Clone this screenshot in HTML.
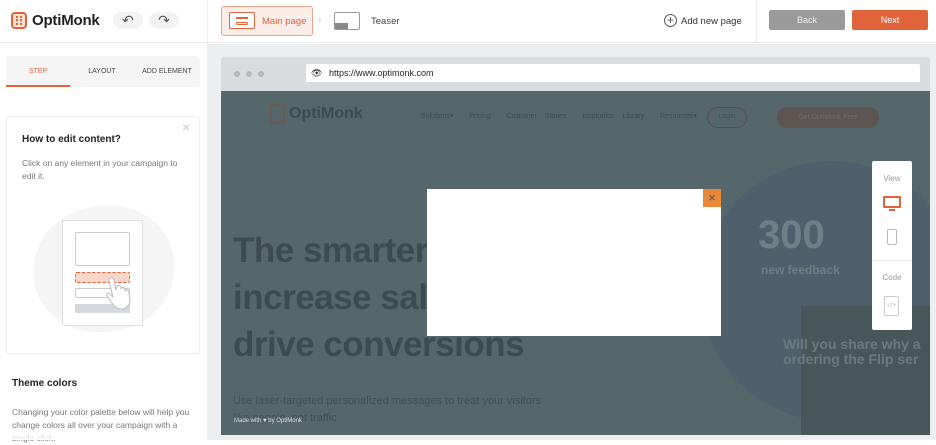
<!DOCTYPE html>
<html><head><meta charset="utf-8"><style>
*{margin:0;padding:0;box-sizing:border-box}
body{width:936px;height:440px;overflow:hidden;font-family:"Liberation Sans",sans-serif;background:#fff;position:relative}
.a{position:absolute}
</style></head><body>
<!-- header -->
<div class="a" style="left:0;top:0;width:936px;height:43px;border-bottom:1px solid #e8e8e8;background:#fff"></div>
<div class="a" style="left:207px;top:0;width:1px;height:43px;background:#ececec"></div>
<div class="a" style="left:756px;top:0;width:1px;height:43px;background:#ececec"></div>
<div class="a" style="left:11px;top:12px;width:16px;height:17px;border:2px solid #e0633a;border-radius:4px;background:#fbe0d4"></div>
<div class="a" style="left:16px;top:16px;width:6px;height:9px;border-left:2px dotted #e0633a;border-right:2px dotted #e0633a"></div>
<div class="a" style="left:32px;top:12px;font-size:15px;font-weight:bold;color:#222;letter-spacing:-0.2px">OptiMonk</div>
<div class="a" style="left:113px;top:12px;width:30px;height:17px;border-radius:9px;background:#f3f3f3;font-size:14px;color:#555;text-align:center;line-height:16px">↶</div>
<div class="a" style="left:149px;top:12px;width:30px;height:17px;border-radius:9px;background:#f3f3f3;font-size:14px;color:#555;text-align:center;line-height:16px">↷</div>
<div class="a" style="left:221px;top:6px;width:92px;height:30px;border:1px solid #e9a58c;border-radius:3px;background:#fbeee8"></div>
<div class="a" style="left:229px;top:12px;width:26px;height:17px;border:1.5px solid #e0633a;border-radius:2px;background:#fff"></div>
<div class="a" style="left:236px;top:17px;width:12px;height:1.5px;background:#e0633a"></div>
<div class="a" style="left:236px;top:22px;width:12px;height:3px;border:1.5px solid #e0633a;border-radius:2px"></div>
<div class="a" style="left:262px;top:16px;font-size:9.5px;color:#e0633a">Main page</div>
<div class="a" style="left:318px;top:14px;font-size:10px;color:#bbb">›</div>
<div class="a" style="left:334px;top:12px;width:26px;height:18px;border:1.5px solid #999;border-radius:2px"></div>
<div class="a" style="left:335px;top:23px;width:13px;height:6px;background:#888"></div>
<div class="a" style="left:371px;top:16px;font-size:9.5px;color:#444">Teaser</div>
<div class="a" style="left:664px;top:14px;width:13px;height:13px;border:1.3px solid #555;border-radius:50%;font-size:12px;line-height:10px;text-align:center;color:#555">+</div>
<div class="a" style="left:681px;top:16px;font-size:9.5px;color:#333">Add new page</div>
<div class="a" style="left:769px;top:10px;width:76px;height:20px;background:#9a9a9a;border-radius:2px;color:#eee;font-size:9px;text-align:center;line-height:20px">Back</div>
<div class="a" style="left:852px;top:10px;width:76px;height:20px;background:#e0633a;border-radius:2px;color:#fff;font-size:9px;text-align:center;line-height:20px">Next</div>
<!-- sidebar -->
<div class="a" style="left:207px;top:43px;width:1px;height:397px;background:#ececec"></div>
<div class="a" style="left:6px;top:56px;width:194px;height:31px;background:#f5f5f5;border-radius:3px"></div>
<div class="a" style="left:6px;top:85px;width:64px;height:2px;background:#e0633a"></div>
<div class="a" style="left:6px;top:68px;width:64px;text-align:center;font-size:7px;color:#e0633a">STEP</div>
<div class="a" style="left:70px;top:68px;width:64px;text-align:center;font-size:7px;color:#444">LAYOUT</div>
<div class="a" style="left:134px;top:68px;width:66px;text-align:center;font-size:7px;color:#444">ADD ELEMENT</div>
<div class="a" style="left:6px;top:116px;width:194px;height:238px;border:1px solid #eee;border-radius:3px"></div>
<div class="a" style="left:182px;top:119px;font-size:14px;color:#ccc">×</div>
<div class="a" style="left:22px;top:134px;font-size:10px;font-weight:bold;color:#222">How to edit content?</div>
<div class="a" style="left:22px;top:157px;width:165px;font-size:8.5px;line-height:13px;color:#777">Click on any element in your campaign to edit it.</div>
<div class="a" style="left:34px;top:206px;width:140px;height:126px;border-radius:50% 45% 50% 45%;background:#f5f5f6"></div>
<div class="a" style="left:62px;top:220px;width:81px;height:106px;border:1px solid #ddd;background:#fff;border-radius:2px"></div>
<div class="a" style="left:75px;top:232px;width:55px;height:34px;border:1px solid #ccc;border-radius:2px"></div>
<div class="a" style="left:75px;top:272px;width:55px;height:11px;border:1px dashed #e0633a;background:#f8d6ca;border-radius:2px"></div>
<div class="a" style="left:75px;top:288px;width:55px;height:10px;border:1px solid #ccc;border-radius:2px"></div>
<div class="a" style="left:75px;top:304px;width:55px;height:9px;background:#d5d9de;border-radius:1px"></div>
<svg class="a" style="left:105px;top:275px" width="36" height="36" viewBox="0 0 36 36"><path d="M5 3c2-1 4 0 4 2l2 10 1-4c2-1 3 0 4 1l0 2c1-2 3-2 4 0v2c1-2 4-1 4 1l1 8c0 5-4 9-9 9-4 0-7-3-9-6l-5-7c-1-2 1-4 3-2l3 3L4 6c0-1 0-2 1-3z" fill="#fff" stroke="#bbb" stroke-width="1"/></svg>
<div class="a" style="left:12px;top:378px;font-size:10px;font-weight:bold;color:#222">Theme colors</div>
<div class="a" style="left:12px;top:406px;width:185px;font-size:8.5px;line-height:13px;color:#777">Changing your color palette below will help you change colors all over your campaign with a single click.</div>
<div class="a" style="left:0;top:430px;width:207px;height:10px;background:linear-gradient(rgba(255,255,255,0),#fff)"></div>
<!-- main -->
<div class="a" style="left:208px;top:44px;width:728px;height:396px;background:#eceef0"></div>
<div class="a" style="left:221px;top:57px;width:709px;height:34px;background:#d9dcdf;border-radius:3px 3px 0 0"></div>
<div class="a" style="left:234px;top:71px;width:6px;height:6px;border-radius:50%;background:#b5b9bd"></div>
<div class="a" style="left:246px;top:71px;width:6px;height:6px;border-radius:50%;background:#b5b9bd"></div>
<div class="a" style="left:258px;top:71px;width:6px;height:6px;border-radius:50%;background:#b5b9bd"></div>
<div class="a" style="left:306px;top:64px;width:614px;height:18px;background:#fff;border-radius:2px"></div>
<div class="a" style="left:311px;top:68px;font-size:9px;color:#222">👁</div>
<div class="a" style="left:329px;top:68px;font-size:9px;color:#222">https://www.optimonk.com</div>
<div class="a" style="left:221px;top:91px;width:709px;height:344px;background:#56676b;overflow:hidden">
 <div class="a" style="left:480px;top:70px;width:260px;height:260px;border-radius:50%;background:#505f6c"></div>
 <div class="a" style="left:580px;top:215px;width:140px;height:140px;background:#465659"></div>
 <div class="a" style="left:49px;top:13px;width:15px;height:20px;border:2px solid #6a5a52;border-radius:3px"></div>
 <div class="a" style="left:68px;top:14px;font-size:16px;font-weight:bold;color:#3b4b50">OptiMonk</div>
 <div class="a" style="left:200px;top:21px;font-size:7px;color:#3c4b50;word-spacing:6px">Solutions▾ &nbsp;Pricing &nbsp;Customer&nbsp;Stories &nbsp;Inspiration&nbsp;Library &nbsp;Resources▾</div>
 <div class="a" style="left:486px;top:16px;width:40px;height:21px;border:1.5px solid #5f4a45;border-radius:11px;font-size:7px;color:#44504f;text-align:center;line-height:18px">Login</div>
 <div class="a" style="left:556px;top:16px;width:102px;height:21px;background:#5c5552;border-radius:11px;font-size:7px;color:#6e6e6e;text-align:center;line-height:21px">Get OptiMonk Free</div>
 <div class="a" style="left:12px;top:136px;font-size:35px;font-weight:bold;color:#3b4b50;line-height:47px;letter-spacing:-0.5px">The smarter way to<br>increase sales and<br>drive conversions</div>
 <div class="a" style="left:537px;top:122px;font-size:40px;font-weight:bold;color:#6f7f86">300</div>
 <div class="a" style="left:540px;top:172px;font-size:12px;font-weight:bold;color:#6f7f86">new feedback</div>
 <div class="a" style="left:562px;top:246px;font-size:14px;font-weight:bold;color:#6a7a80;line-height:15px;white-space:nowrap">Will you share why a<br>ordering the Flip ser</div>
 <div class="a" style="left:12px;top:302px;font-size:11px;color:#3f4f55;line-height:17px">Use laser-targeted personalized messages to treat your visitors<br>like people, not traffic</div>
 <div class="a" style="left:13px;top:327px;font-size:6px;color:#dfe3e4">Made with ♥ by OptiMonk</div>
</div>
<!-- popup -->
<div class="a" style="left:427px;top:189px;width:294px;height:147px;background:#fff"></div>
<div class="a" style="left:703px;top:189px;width:18px;height:18px;background:#e8883a;color:#555;font-size:13px;text-align:center;line-height:17px">×</div>
<!-- view panel -->
<div class="a" style="left:872px;top:161px;width:40px;height:169px;background:#fff;border-radius:2px"></div>
<div class="a" style="left:872px;top:174px;width:40px;text-align:center;font-size:8px;color:#999">View</div>
<div class="a" style="left:883px;top:196px;width:18px;height:12px;border:2px solid #e0633a;border-radius:1px"></div>
<div class="a" style="left:889px;top:209px;width:6px;height:2px;background:#e0633a"></div>
<div class="a" style="left:887px;top:229px;width:10px;height:16px;border:1.3px solid #bbb;border-radius:2px"></div>
<div class="a" style="left:872px;top:260px;width:40px;height:1px;background:#e8e8e8"></div>
<div class="a" style="left:872px;top:273px;width:40px;text-align:center;font-size:8px;color:#999">Code</div>
<div class="a" style="left:884px;top:296px;width:15px;height:20px;border:1.3px solid #ccc;border-radius:2px;font-size:6px;color:#bbb;text-align:center;line-height:18px">&lt;/&gt;</div>
</body></html>
